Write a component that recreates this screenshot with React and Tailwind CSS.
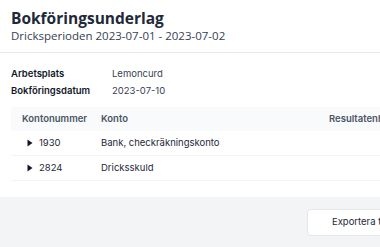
import { useState } from 'react';

// Small solid caret for expandable rows
function Caret() {
  return (
    <svg width="6" height="8" viewBox="0 0 6 8" className="text-gray-900">
      <path d="M0.5 0.5 L5.5 4 L0.5 7.5 Z" fill="currentColor" />
    </svg>
  );
}

const rows = [
  { number: '1930', name: 'Bank, checkräkningskonto' },
  { number: '2824', name: 'Dricksskuld' },
];

export default function App() {
  const [open, setOpen] = useState({});

  return (
    <div className="w-[380px] h-[247px] overflow-hidden bg-white flex flex-col font-['Inter',sans-serif] text-gray-900">
      {/* Header */}
      <div className="px-[11px] pt-[9px] pb-[9px] border-b border-gray-200 font-['Open_Sans',sans-serif]">
        <h1 className="text-[15.5px] leading-[19px] font-bold text-gray-800">Bokföringsunderlag</h1>
        <p className="text-[11.5px] leading-[15px] text-gray-700">Dricksperioden 2023-07-01 - 2023-07-02</p>
      </div>

      {/* Details */}
      <div className="px-[11px] pt-[15px] flex flex-col gap-[6px] text-[9.5px] leading-[11px]">
        <div className="flex">
          <span className="w-[101px] font-semibold">Arbetsplats</span>
          <span className="text-gray-700">Lemoncurd</span>
        </div>
        <div className="flex">
          <span className="w-[101px] font-semibold">Bokföringsdatum</span>
          <span className="text-gray-700">2023-07-10</span>
        </div>
      </div>

      {/* Table */}
      <div className="ml-[11px] mt-[11px] text-[9.5px]">
        <div className="flex items-center h-[24px] bg-gray-50 font-semibold text-gray-600 whitespace-nowrap">
          <span className="pl-[11px] w-[90px]">Kontonummer</span>
          <span className="flex-1">Konto</span>
          <span className="w-[51px]">Resultatenhet</span>
        </div>
        {rows.map((row) => (
          <div
            key={row.number}
            className="flex items-center h-[25px] border-b border-gray-100 text-gray-800 whitespace-nowrap"
            onClick={() => setOpen({ ...open, [row.number]: !open[row.number] })}
          >
            <span className="pl-[16px] w-[90px] flex items-center gap-[6px]">
              <Caret />
              {row.number}
            </span>
            <span className="flex-1">{row.name}</span>
          </div>
        ))}
      </div>

      {/* Footer */}
      <div className="mt-auto h-[50px] bg-gray-100 border-t border-gray-100 flex items-center justify-end">
        <button className="mr-[-44px] h-[27px] px-[24px] bg-white border border-gray-200 rounded-[4px] text-[9.5px] text-gray-800 whitespace-nowrap">
          Exportera till fil
        </button>
      </div>
    </div>
  );
}
